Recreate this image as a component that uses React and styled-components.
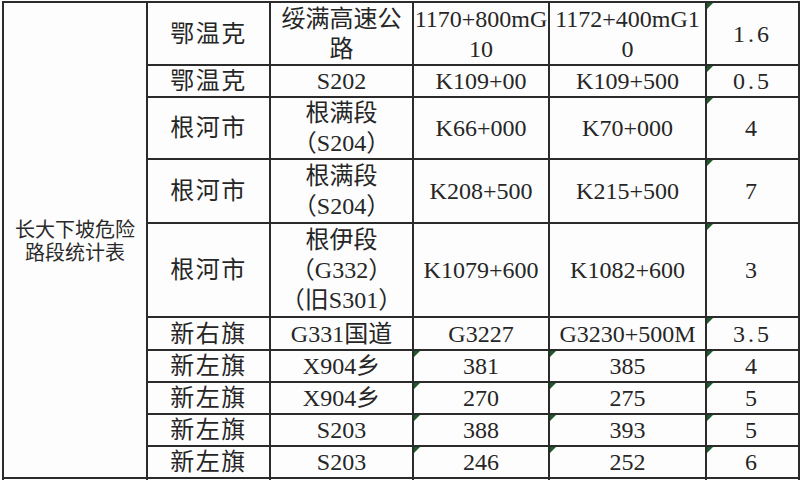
import React from "react";
import styled, { createGlobalStyle, css } from "styled-components";

const Global = createGlobalStyle`
  html, body { margin: 0; padding: 0; background: #ffffff; overflow: hidden; }
  body { width: 800px; height: 480px; }
`;

const Page = styled.div`
  width: 800px;
  height: 480px;
  overflow: hidden;
  background: #fdfdfd;
  padding: 1px 0 0 2px;
  box-sizing: border-box;
`;

const Table = styled.table`
  border-collapse: collapse;
  table-layout: fixed;
  width: 796px;
  color: #262626;
  font-family: "Liberation Serif", "Noto Sans CJK SC", serif;
  font-size: 24px;
`;

const Row = styled.tr`
  height: ${(p) => p.$h}px;
`;

const Cell = styled.td`
  position: relative;
  border: 2px solid #2b2b2b;
  padding: 0;
  text-align: center;
  vertical-align: middle;
  line-height: 30px;
  white-space: nowrap;
  letter-spacing: ${(p) => (p.$cjk ? "1.5px" : "0")};
  ${(p) =>
    p.$mark &&
    css`
      &::before {
        content: "";
        position: absolute;
        left: 0;
        top: 0;
        border-style: solid;
        border-width: 6px 6px 0 0;
        border-color: #1f5a2a transparent transparent transparent;
      }
    `}
`;

const Num = styled(Cell)`
  letter-spacing: 3px;
`;

const TitleCell = styled.td`
  border: 2px solid #2b2b2b;
  padding: 0;
  text-align: center;
  vertical-align: middle;
  font-family: "Noto Sans CJK SC", sans-serif;
  font-size: 20px;
  line-height: 23px;
  color: #2a2a2a;
`;

const EmptyCell = styled.td`
  border: 2px solid #2b2b2b;
  border-bottom: none;
  padding: 0;
`;

const rows = [
  { h: 63, a: "鄂温克", b: ["绥满高速公", "路"], c: ["1170+800mG", "10"], d: ["1172+400mG1", "0"], e: "1.6" },
  { h: 32, a: "鄂温克", b: ["S202"], c: ["K109+00"], d: ["K109+500"], e: "0.5" },
  { h: 62, a: "根河市", b: ["根满段", "（S204）"], c: ["K66+000"], d: ["K70+000"], e: "4" },
  { h: 64, a: "根河市", b: ["根满段", "（S204）"], c: ["K208+500"], d: ["K215+500"], e: "7" },
  { h: 94, a: "根河市", b: ["根伊段", "（G332）", "（旧S301）"], c: ["K1079+600"], d: ["K1082+600"], e: "3" },
  { h: 33, a: "新右旗", b: ["G331国道"], c: ["G3227"], d: ["G3230+500M"], e: "3.5" },
  { h: 32, a: "新左旗", b: ["X904乡"], c: ["381"], d: ["385"], e: "4", m: true },
  { h: 31, a: "新左旗", b: ["X904乡"], c: ["270"], d: ["275"], e: "5", m: true },
  { h: 32, a: "新左旗", b: ["S203"], c: ["388"], d: ["393"], e: "5", m: true },
  { h: 31, a: "新左旗", b: ["S203"], c: ["246"], d: ["252"], e: "6", m: true },
];

const Lines = ({ items }) =>
  items.map((t, i) => (
    <React.Fragment key={i}>
      {i > 0 && <br />}
      {t}
    </React.Fragment>
  ));

export default function App() {
  return (
    <>
      <Global />
      <Page>
        <Table>
          <colgroup>
            <col style={{ width: 144 }} />
            <col style={{ width: 123 }} />
            <col style={{ width: 143 }} />
            <col style={{ width: 136 }} />
            <col style={{ width: 157 }} />
            <col style={{ width: 93 }} />
          </colgroup>
          <tbody>
            {rows.map((r, i) => (
              <Row key={i} $h={r.h}>
                {i === 0 && (
                  <TitleCell rowSpan={rows.length}>
                    长大下坡危险
                    <br />
                    路段统计表
                  </TitleCell>
                )}
                <Cell $cjk>{r.a}</Cell>
                <Cell>
                  <Lines items={r.b} />
                </Cell>
                <Cell $mark={r.m}>
                  <Lines items={r.c} />
                </Cell>
                <Cell $mark={r.m}>
                  <Lines items={r.d} />
                </Cell>
                <Num $mark>{r.e}</Num>
              </Row>
            ))}
            <Row $h={20}>
              <EmptyCell />
              <EmptyCell />
              <EmptyCell />
              <EmptyCell />
              <EmptyCell />
              <EmptyCell />
            </Row>
          </tbody>
        </Table>
      </Page>
    </>
  );
}
